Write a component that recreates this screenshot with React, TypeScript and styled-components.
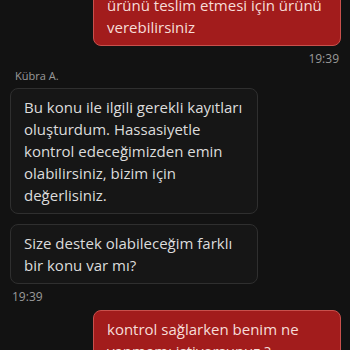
import React from 'react';
import styled, { createGlobalStyle } from 'styled-components';

const GlobalStyle = createGlobalStyle`
  html, body {
    margin: 0;
    padding: 0;
    background: #121212;
    overflow: hidden;
  }
  body {
    font-family: 'Open Sans', 'Noto Sans', sans-serif;
  }
`;

const Chat = styled.main`
  display: flex;
  flex-direction: column;
  width: 350px;
  height: 350px;
  overflow: hidden;
  background: #121212;
`;

// scrolled thread: first bubble starts above the window
const Thread = styled.div`
  display: flex;
  flex-direction: column;
  margin-top: -36px;
  padding: 0 9px 0 10px;
`;

const Group = styled.section<{ $mine?: boolean }>`
  display: flex;
  flex-direction: column;
  align-items: ${(p) => (p.$mine ? 'flex-end' : 'flex-start')};
  gap: ${(p) => (p.$mine ? '0' : '10px')};
  margin-bottom: ${(p) => (p.$mine ? '1px' : '5px')};
`;

const Sender = styled.div`
  font-size: 11px;
  line-height: 16px;
  color: #9a9a9a;
  padding-left: 5px;
  margin-bottom: -6px;
`;

const Bubble = styled.div<{ $mine?: boolean }>`
  box-sizing: border-box;
  width: 248px;
  padding: 7px 12px 7px 13px;
  border-radius: 8px;
  font-size: 15px;
  line-height: 22px;
  white-space: pre-line;
  background: ${(p) => (p.$mine ? '#a21c1c' : '#161616')};
  border: 1px solid ${(p) => (p.$mine ? '#c8504c' : '#2f2f2f')};
  color: ${(p) => (p.$mine ? '#f6dcd8' : '#dcdcdc')};
`;

const Time = styled.div<{ $mine?: boolean }>`
  font-size: 12px;
  line-height: 16px;
  color: #9a9a9a;
  padding: ${(p) => (p.$mine ? '0 2px 0 0' : '0 0 0 2px')};
  margin-top: ${(p) => (p.$mine ? '5px' : '-5px')};
`;

function App() {
  return (
    <Chat>
      <GlobalStyle />
      <Thread>
        <Group $mine>
          <Bubble $mine>
            {'Kargo görevlisi geldiğinde\nürünü teslim etmesi için ürünü\nverebilirsiniz'}
          </Bubble>
          <Time $mine>19:39</Time>
        </Group>
        <Group>
          <Sender>Kübra A.</Sender>
          <Bubble>
            {'Bu konu ile ilgili gerekli kayıtları\noluşturdum. Hassasiyetle\nkontrol edeceğimizden emin\nolabilirsiniz, bizim için\ndeğerlisiniz.'}
          </Bubble>
          <Bubble>{'Size destek olabileceğim farklı\nbir konu var mı?'}</Bubble>
          <Time>19:39</Time>
        </Group>
        <Group $mine>
          <Bubble $mine>{'kontrol sağlarken benim ne\nyapmamı istiyorsunuz ?'}</Bubble>
        </Group>
      </Thread>
    </Chat>
  );
}

export default App;
